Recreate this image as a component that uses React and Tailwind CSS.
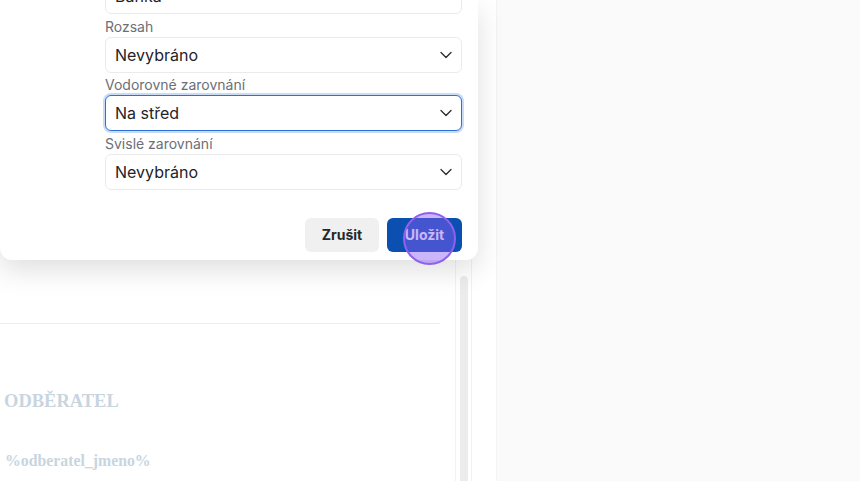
import React from "react";
import { ChevronDown } from "lucide-react";

const fields = [
  { label: "Rozsah", value: "Nevybráno" },
  { label: "Vodorovné zarovnání", value: "Na střed", focused: true },
  { label: "Svislé zarovnání", value: "Nevybráno" },
];

const SelectField = ({ label, value, focused }) => (
  <div className="flex flex-col">
    {label && <label className="h-5 text-sm leading-5 text-[#6b6f76]">{label}</label>}
    <div
      className={`flex h-9 items-center justify-between rounded-md border bg-white pl-[9px] pr-[5px] text-base text-[#1f2329] ${
        focused ? "border-[#2f6fd8] ring-2 ring-[#c9dcf7]" : "border-[#ebebeb]"
      }`}
    >
      <span>{value}</span>
      {label && <ChevronDown size={20} strokeWidth={1.6} className="text-[#2a2e34]" />}
    </div>
  </div>
);

export default function App() {
  return (
    <div className="relative flex h-[481px] w-[860px] overflow-hidden bg-white font-['Inter',sans-serif]">
      {/* document page */}
      <div className="flex h-full w-[472px]">
        <div className="h-full w-[455px] pr-[15px]">
          <div className="h-[323px]" />
          <div className="h-px bg-[#ededed]" />
          <div className="pl-[4px] pt-[65px] font-['Liberation_Serif',serif] text-[18.5px] font-bold leading-6 text-[#c8d5df]">
            ODBĚRATEL
          </div>
          <div className="pl-[5px] pt-[38px] font-['Liberation_Serif',serif] text-[15.8px] font-bold leading-5 text-[#c8d5df]">
            %odberatel_jmeno%
          </div>
        </div>
        <div className="flex h-full w-[17px] justify-center border-l border-r border-[#f2f2f2] pt-[276px]">
          <div className="h-full w-[8px] rounded-t bg-[#ececec]" />
        </div>
      </div>
      <div className="h-full w-[25px] border-r border-[#f3f3f3] bg-white" />
      <div className="h-full flex-1 bg-[#fafafa]" />

      {/* modal */}
      <div className="absolute left-0 top-0 w-[478px] rounded-b-xl bg-white pb-2 pl-[105px] pr-4 shadow-[0_10px_28px_rgba(0,0,0,0.13)]">
        <div className="mt-[-22px] flex flex-col gap-[2.5px]">
          <SelectField value="Banka" />
          {fields.map((f) => (
            <SelectField key={f.label} {...f} />
          ))}
        </div>
        <div className="mt-[28px] flex justify-end gap-2">
          <button className="h-[34px] w-[74px] rounded-md bg-[#f0f0f0] text-sm font-bold text-[#24282e]">
            Zrušit
          </button>
          <button className="h-[34px] w-[75px] rounded-md bg-[#0b50b0] text-sm font-bold text-white">
            Uložit
          </button>
        </div>
      </div>

      {/* click indicator */}
      <div className="absolute left-[403px] top-[212px] h-[53px] w-[53px] rounded-full border-2 border-[#9060f0] bg-[#8b5cf6]/45" />
    </div>
  );
}
